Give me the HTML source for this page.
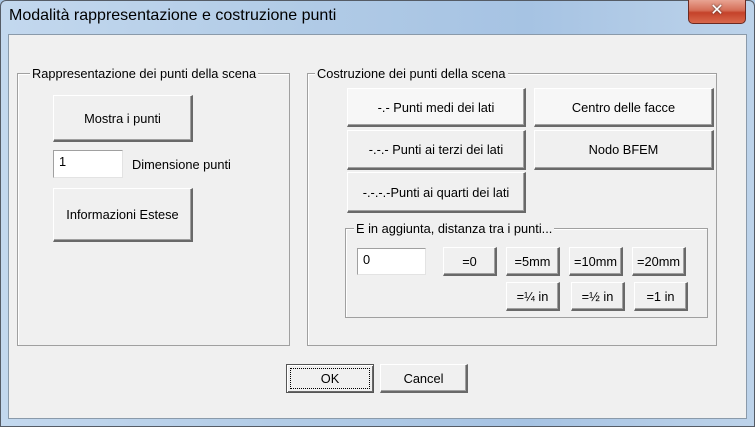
<!DOCTYPE html>
<html><head><meta charset="utf-8"><style>
*{box-sizing:border-box;margin:0;padding:0}
body{width:755px;height:427px;overflow:hidden;background:#a9c6e4;font-family:"Liberation Sans","DejaVu Sans",sans-serif;font-size:12.8px;color:#000;position:relative}
.frame{position:absolute;left:0;top:0;width:755px;height:427px;border:1px solid #555c66;border-radius:6px 6px 0 0;background:linear-gradient(90deg,#c3d8ee 0%,#b1cbe6 40%,#a6c3e3 70%,#bdd3ea 100%)}
.title{position:absolute;left:9px;top:7px;font-size:16px;color:#000}
.close{position:absolute;left:688px;top:0;width:58px;height:24px;border:1px solid #6b2a22;border-top:none;border-radius:0 0 5px 5px;background:linear-gradient(#e8a493 0%,#d56e57 45%,#c5422a 55%,#d8684c 100%);color:#fff;text-align:center;font-weight:bold;font-size:16px;line-height:22px;text-shadow:0 0 2px #333}
.client{position:absolute;left:8px;top:34px;width:739px;height:385px;background:#f0f0f0;border:1px solid #8a9aaa}
.a{position:absolute}
.grp{position:absolute;border:1px solid #a0a0a0;box-shadow:inset 1px 1px 0 #fff}
.leg{position:absolute;background:#f0f0f0;padding:0 2px;line-height:14px}
.btn{position:absolute;background:#f0f0f0;border-top:1px solid #fff;border-left:1px solid #fff;border-right:2px solid #696969;border-bottom:2px solid #696969;box-shadow:inset -1px -1px 0 #a0a0a0;display:flex;align-items:center;justify-content:center}
.tb{position:absolute;background:#fff;border-top:1px solid #a0a0a0;border-left:1px solid #a0a0a0;border-right:1px solid #e3e3e3;border-bottom:1px solid #e3e3e3;padding:3px 0 0 5px}
</style></head><body>
<div class="frame"></div>
<div class="title">Modalità rappresentazione e costruzione punti</div>
<div class="close">✕</div>
<div class="client"></div>

<div class="grp" style="left:17px;top:73px;width:273px;height:273px"></div>
<div class="leg" style="left:30px;top:67px">Rappresentazione dei punti della scena</div>
<div class="btn" style="left:53px;top:95px;width:140px;height:47px">Mostra i punti</div>
<div class="tb" style="left:53px;top:150px;width:70px;height:28px">1</div>
<div class="a" style="left:132px;top:157px">Dimensione punti</div>
<div class="btn" style="left:53px;top:188px;width:140px;height:54px">Informazioni Estese</div>

<div class="grp" style="left:307px;top:73px;width:410px;height:273px"></div>
<div class="leg" style="left:315px;top:67px">Costruzione dei punti della scena</div>
<div class="btn" style="left:347px;top:88px;width:179px;height:39px;background:#f7f7f7">-.- Punti medi dei lati</div>
<div class="btn" style="left:534px;top:88px;width:180px;height:39px;background:#f7f7f7">Centro delle facce</div>
<div class="btn" style="left:347px;top:130px;width:179px;height:40px">-.-.- Punti ai terzi dei lati</div>
<div class="btn" style="left:534px;top:130px;width:180px;height:40px">Nodo BFEM</div>
<div class="btn" style="left:347px;top:172px;width:179px;height:41px">-.-.-.-Punti ai quarti dei lati</div>

<div class="grp" style="left:345px;top:228px;width:363px;height:90px"></div>
<div class="leg" style="left:354px;top:222px">E in aggiunta, distanza tra i punti...</div>
<div class="tb" style="left:357px;top:248px;width:69px;height:27px">0</div>
<div class="btn" style="left:443px;top:247px;width:54px;height:29px">=0</div>
<div class="btn" style="left:506px;top:247px;width:54px;height:29px">=5mm</div>
<div class="btn" style="left:569px;top:247px;width:54px;height:29px">=10mm</div>
<div class="btn" style="left:632px;top:247px;width:54px;height:29px">=20mm</div>
<div class="btn" style="left:506px;top:282px;width:54px;height:29px">=¼ in</div>
<div class="btn" style="left:571px;top:282px;width:54px;height:29px">=½ in</div>
<div class="btn" style="left:634px;top:282px;width:54px;height:29px">=1 in</div>

<div class="btn" style="left:286px;top:364px;width:88px;height:29px;border:1px solid #555;box-shadow:inset 1px 1px 0 #fff,inset -1px -1px 0 #696969"><span style="position:absolute;left:3px;top:3px;right:3px;bottom:3px;border:1px dotted #000"></span>OK</div>
<div class="btn" style="left:380px;top:364px;width:88px;height:29px">Cancel</div>
</body></html>
